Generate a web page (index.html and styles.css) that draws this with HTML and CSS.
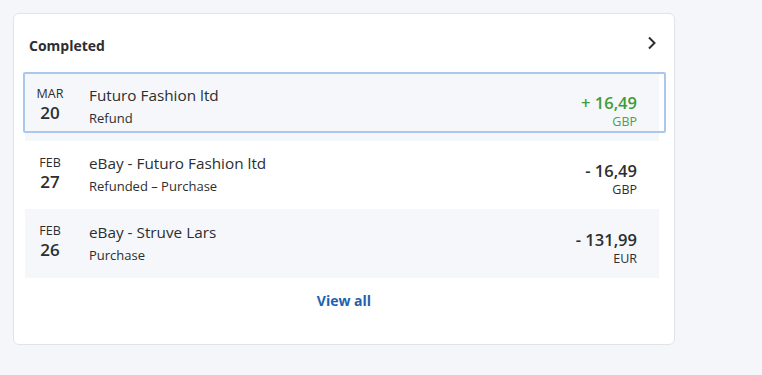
FILE: index.html
```html
<!DOCTYPE html>
<html>
<head>
<meta charset="utf-8">
<link rel="stylesheet" href="styles.css">
</head>
<body>
<div class="page">
  <section class="card">
    <header class="card-head">
      <h2 class="title">Completed</h2>
      <svg class="chev" width="10" height="14" viewBox="0 0 10 14"><path d="M2 1.5 L7.5 7 L2 12.5" fill="none" stroke="#2c2e2f" stroke-width="2"/></svg>
    </header>
    <ul class="list">
      <li class="row row-alt row-focus">
        <div class="date"><span class="mon">MAR</span><span class="day">20</span></div>
        <div class="info"><div class="name">Futuro Fashion ltd</div><div class="sub">Refund</div></div>
        <div class="amt pos"><div class="val">+ 16,49</div><div class="cur">GBP</div></div>
      </li>
      <li class="row">
        <div class="date"><span class="mon">FEB</span><span class="day">27</span></div>
        <div class="info"><div class="name">eBay - Futuro Fashion ltd</div><div class="sub">Refunded – Purchase</div></div>
        <div class="amt"><div class="val">- 16,49</div><div class="cur">GBP</div></div>
      </li>
      <li class="row row-alt">
        <div class="date"><span class="mon">FEB</span><span class="day">26</span></div>
        <div class="info"><div class="name">eBay - Struve Lars</div><div class="sub">Purchase</div></div>
        <div class="amt"><div class="val">- 131,99</div><div class="cur">EUR</div></div>
      </li>
    </ul>
    <div class="foot"><a class="viewall" href="#">View all</a></div>
  </section>
</div>
</body>
</html>
```
FILE: styles.css
```css
html, body {
  margin: 0;
  padding: 0;
  background: #f5f6fa;
  font-family: "Open Sans", "Noto Sans", sans-serif;
  color: #2c2e2f;
}
.page {
  padding: 13px 0 0 13px;
}
.card {
  background: #fff;
  border: 1px solid #e1e3e8;
  border-radius: 6px;
  padding: 0 15px 0 11px;
  box-sizing: border-box;
  width: 662px;
  height: 332px;
}
.card-head {
  height: 58px;
  display: flex;
  align-items: center;
  justify-content: space-between;
  padding: 0 2px 0 4px;
}
.title {
  margin: 5px 0 0 0;
  font-size: 14px;
  font-weight: 700;
}
.chev {
  display: block;
  margin-top: -1px;
}
.list {
  list-style: none;
  margin: 0;
  padding: 0;
}
.row {
  position: relative;
  height: 68.5px;
  display: flex;
  align-items: center;
  padding: 0 22px 0 10px;
  box-sizing: border-box;
}
.row-alt {
  background: #f5f7fa;
}
.row-focus::after {
  content: "";
  position: absolute;
  left: -2px;
  top: 0;
  right: -7px;
  height: 61px;
  border: 2px solid #a9c7ef;
  border-radius: 2px;
  box-sizing: border-box;
}
.date {
  width: 30px;
  margin-right: 24px;
  display: flex;
  flex-direction: column;
  align-items: center;
  margin-top: -4px;
}
.mon {
  font-size: 12.5px;
  line-height: 18px;
}
.day {
  font-size: 17px;
  font-weight: 600;
  line-height: 20px;
}
.info {
  flex: 1;
  margin-top: -1px;
}
.name {
  font-size: 15.3px;
  line-height: 20px;
}
.sub {
  font-size: 13px;
  line-height: 18px;
  margin-top: 4px;
}
.amt {
  text-align: right;
  margin-top: 10px;
}
.val {
  font-size: 16.5px;
  font-weight: 600;
  line-height: 20px;
}
.cur {
  font-size: 12.5px;
  line-height: 17px;
}
.pos .val { color: #3e9b3a; }
.pos .cur { color: #4f9e4b; }
.foot {
  display: flex;
  justify-content: center;
  padding-top: 13px;
  padding-left: 4px;
}
.viewall {
  color: #1e62ad;
  font-weight: 700;
  font-size: 14px;
  text-decoration: none;
}
```
